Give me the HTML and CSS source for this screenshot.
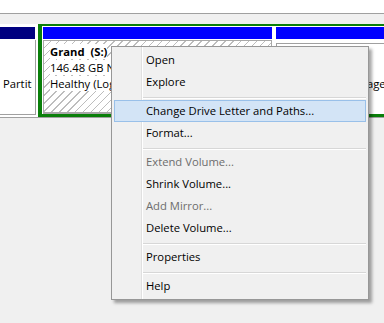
FILE: index.html
```html
<!DOCTYPE html>
<html>
<head>
<meta charset="utf-8">
<link rel="stylesheet" href="styles.css">
</head>
<body>
<div class="top"></div>
<div class="strip"></div>
<div class="disk">
  <div class="part part-left">
    <div class="bar navy"></div>
    <div class="box">
      <div class="line">&nbsp;</div>
      <div class="line">&nbsp;</div>
      <div class="line clip">Partition)</div>
    </div>
  </div>
  <div class="sel-group">
    <div class="part part-sel">
      <div class="bar blue"></div>
      <div class="box hatch">
        <div class="line"><span class="txt bold">Grand&nbsp; (S:)</span></div>
        <div class="line"><span class="txt">146.48 GB NTFS</span></div>
        <div class="line"><span class="txt">Healthy (Logical Drive)</span></div>
      </div>
    </div>
    <div class="part part-right">
      <div class="bar blue"></div>
      <div class="box plain">
        <div class="line bold">(C:)</div>
        <div class="line">97.66 GB NTFS</div>
        <div class="line">Healthy (Boot, Page File, Crash Dump)</div>
      </div>
    </div>
  </div>
</div>
<div class="rest"></div>

<div class="menu">
  <div class="item">Open</div>
  <div class="item">Explore</div>
  <div class="sep"></div>
  <div class="item hot">Change Drive Letter and Paths...</div>
  <div class="item">Format...</div>
  <div class="sep"></div>
  <div class="item disabled">Extend Volume...</div>
  <div class="item">Shrink Volume...</div>
  <div class="item disabled">Add Mirror...</div>
  <div class="item">Delete Volume...</div>
  <div class="sep"></div>
  <div class="item">Properties</div>
  <div class="sep"></div>
  <div class="item">Help</div>
</div>
</body>
</html>
```

FILE: styles.css
```css
html, body {
  margin: 0;
  padding: 0;
}
body {
  width: 384px;
  height: 323px;
  overflow: hidden;
  background: #f0f0f0;
  font-family: "Open Sans", "Noto Sans", sans-serif;
  font-size: 11.25px;
  color: #000;
  position: relative;
}
.top {
  height: 13px;
  background: #fff;
  border-bottom: 1px solid #a0a0a0;
}
.strip {
  height: 10px;
  background: #f0f0f0;
}
.disk {
  height: 93px;
  background: #fff;
  display: flex;
  border-bottom: 1px solid #a0a0a0;
}
.part {
  display: flex;
  flex-direction: column;
}
.bar {
  height: 12px;
  flex: none;
}
.navy { background: #000080; }
.blue { background: #0000ff; }
.line {
  height: 16px;
  line-height: 16px;
  white-space: nowrap;
}
.bold { font-weight: bold; }

.part-left {
  width: 36px;
  padding-top: 3px;
  padding-bottom: 2px;
  box-sizing: border-box;
  flex: none;
}
.part-left .bar {
  margin-right: 1px;
  margin-bottom: 1px;
}
.part-left .box {
  flex: 1;
  border-right: 1px solid #a0a0a0;
  border-bottom: 1px solid #a0a0a0;
  padding: 4px 0 0 3px;
  overflow: hidden;
}
.clip {
  width: 28.5px;
  overflow: hidden;
}

.sel-group {
  margin-left: 2px;
  flex: 1;
  display: flex;
  border-top: 2px solid #0a7f0a;
  border-bottom: 3px solid #0a7f0a;
  min-width: 0;
}
.part-sel {
  border-left: 4px solid #0a7f0a;
  padding: 1px 2px 0 1px;
  width: 229px;
  flex: none;
}
.part-sel .bar { margin-bottom: 1px; }
.hatch {
  flex: 1;
  border: 1px solid #a8a8a8;
  border-bottom-width: 2px;
  padding: 3px 0 0 6px;
  background: repeating-linear-gradient(135deg, #ffffff 0 4.5px, #bdbdbd 4.5px 5.6px);
  overflow: hidden;
}
.txt {
  background: #fff;
}
.part-right {
  flex: 1;
  padding: 1px 0 0 2px;
  min-width: 0;
}
.part-right .bar { margin-bottom: 4px; }
.plain {
  flex: 1;
  border-left: 1px solid #a0a0a0;
  border-top: 1px solid #a0a0a0;
  padding: 0 0 0 6px;
  overflow: hidden;
}
.rest {
  height: 200px;
}

.menu {
  position: absolute;
  left: 111px;
  top: 46px;
  width: 258px;
  box-sizing: border-box;
  border: 1px solid #979797;
  padding: 2px;
  background:
    linear-gradient(to right, transparent 29px, #e0e0e0 29px, #e0e0e0 30px, #ffffff 30px, #ffffff 31px, transparent 31px),
    #f0f0f0;
  box-shadow: 3px 3px 3px rgba(0, 0, 0, 0.35);
}
.item {
  height: 20px;
  line-height: 20px;
  border: 1px solid transparent;
  padding-left: 31px;
  white-space: nowrap;
}
.item.hot {
  background: #d3e4f6;
  border-color: #99c0e9;
}
.item.disabled {
  color: #6d6d6d;
}
.sep {
  height: 0;
  margin: 4px 0 1px 29px;
  border-top: 1px solid #d7d7d7;
  border-bottom: 1px solid #fff;
}
```
